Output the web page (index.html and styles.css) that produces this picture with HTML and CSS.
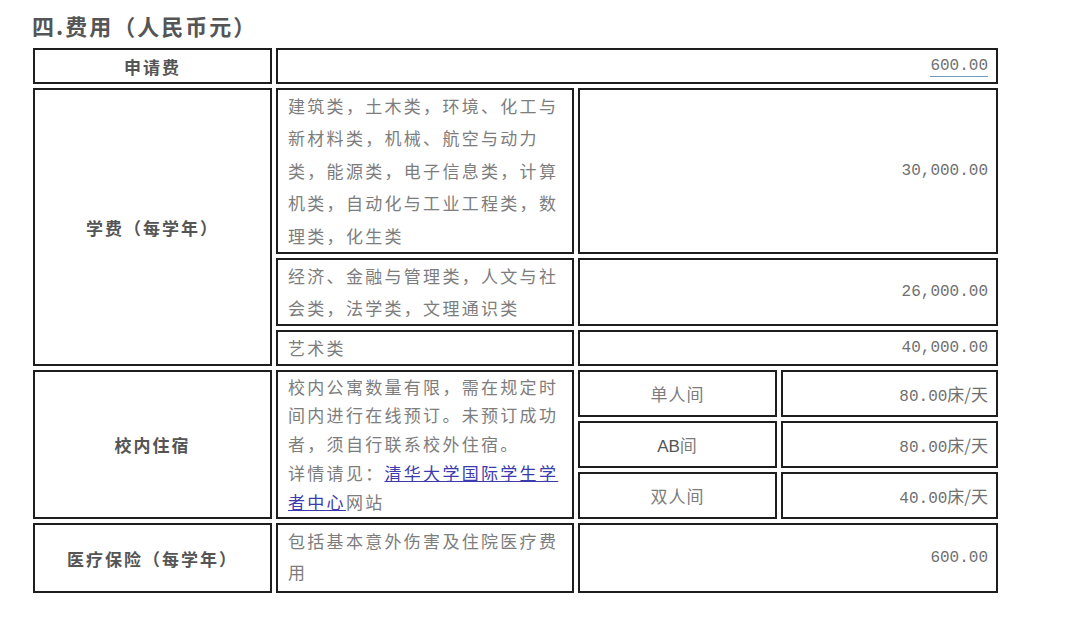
FILE: index.html
```html
<!DOCTYPE html>
<html lang="zh-CN">
<head>
<meta charset="utf-8">
<title>费用</title>
<link rel="stylesheet" href="styles.css">
</head>
<body>
<h2 class="title">四.费用（人民币元）</h2>
<table class="fees">
  <colgroup>
    <col class="c1"><col class="c2"><col class="c3"><col class="c4">
  </colgroup>
  <tr class="r-apply">
    <td class="label">申请费</td>
    <td class="num" colspan="3"><span class="tel">600.00</span></td>
  </tr>
  <tr class="r-t1">
    <td class="label" rowspan="3">学费（每学年）</td>
    <td class="txt t1">建筑类，土木类，环境、化工与新材料类，机械、航空与动力类，能源类，电子信息类，计算机类，自动化与工业工程类，数理类，化生类</td>
    <td class="num" colspan="2">30,000.00</td>
  </tr>
  <tr class="r-t2">
    <td class="txt t2">经济、金融与管理类，人文与社会类，法学类，文理通识类</td>
    <td class="num" colspan="2">26,000.00</td>
  </tr>
  <tr class="r-t3">
    <td class="txt">艺术类</td>
    <td class="num" colspan="2">40,000.00</td>
  </tr>
  <tr class="r-d">
    <td class="label" rowspan="3">校内住宿</td>
    <td class="txt dorm" rowspan="3">校内公寓数量有限，需在规定时间内进行在线预订。未预订成功者，须自行联系校外住宿。<br>详情请见：<a class="link" href="#">清华大学国际学生学者中心</a>网站</td>
    <td class="room">单人间</td>
    <td class="num">80.00<span class="cjk">床/天</span></td>
  </tr>
  <tr class="r-d">
    <td class="room"><span class="latin">AB</span>间</td>
    <td class="num">80.00<span class="cjk">床/天</span></td>
  </tr>
  <tr class="r-d">
    <td class="room">双人间</td>
    <td class="num">40.00<span class="cjk">床/天</span></td>
  </tr>
  <tr class="r-ins">
    <td class="label">医疗保险（每学年）</td>
    <td class="txt ins">包括基本意外伤害及住院医疗费用</td>
    <td class="num" colspan="2">600.00</td>
  </tr>
</table>
</body>
</html>
```
FILE: styles.css
```css
html, body {
  margin: 0;
  padding: 0;
  background: #ffffff;
}
body {
  font-family: "Noto Sans CJK SC", "Liberation Serif", serif;
  color: #777777;
}
.title {
  margin: 10px 0 0 0;
  padding-left: 32px;
  font-size: 22px;
  line-height: 30px;
  font-weight: bold;
  color: #555555;
  letter-spacing: 2px;
}
.fees {
  margin: 4px 0 0 29px;
  border-collapse: separate;
  border-spacing: 4px;
  table-layout: fixed;
  width: 973px;
}
.c1 { width: 239px; }
.c2 { width: 298px; }
.c3 { width: 199px; }
.c4 { width: 217px; }
.fees td {
  border: 2px solid #1e1e1e;
  padding: 0;
  box-sizing: border-box;
  vertical-align: middle;
  font-size: 17px;
}
.label {
  text-align: center;
  font-weight: bold;
  color: #555555;
  font-size: 17px;
  letter-spacing: 2px;
}
.txt {
  padding: 0 6px 0 10px !important;
  line-height: 32px;
  letter-spacing: 2.3px;
  color: #7d7d7d;
}
.t1 { line-height: 32.4px; }
.t2 { line-height: 32px; }
.dorm {
  line-height: 28.8px;
}
.ins {
  line-height: 31px;
  padding-bottom: 4px !important;
}
.num {
  text-align: right;
  padding-right: 8px !important;
  font-family: "Liberation Mono", "Noto Sans CJK SC", monospace;
  font-size: 16px !important;
  color: #707070;
}
.cjk {
  font-family: "Noto Sans CJK SC", sans-serif;
  font-size: 17px;
}
.tel {
  border-bottom: 1px solid #6f9cc0;
  padding-bottom: 1px;
}
.room {
  text-align: center;
  color: #7d7d7d;
  letter-spacing: 1px;
}
.latin {
  font-family: "Liberation Sans", sans-serif;
  letter-spacing: 0;
  color: #555555;
}
.link {
  color: #3b3bb0;
  text-decoration: underline;
}
.r-apply td { height: 36px; }
.r-t2 td { height: 68px; }
.r-t3 td { height: 36px; }
.r-d td.room, .r-d td.num { height: 47px; }
.r-ins td { height: 69px; }
```
